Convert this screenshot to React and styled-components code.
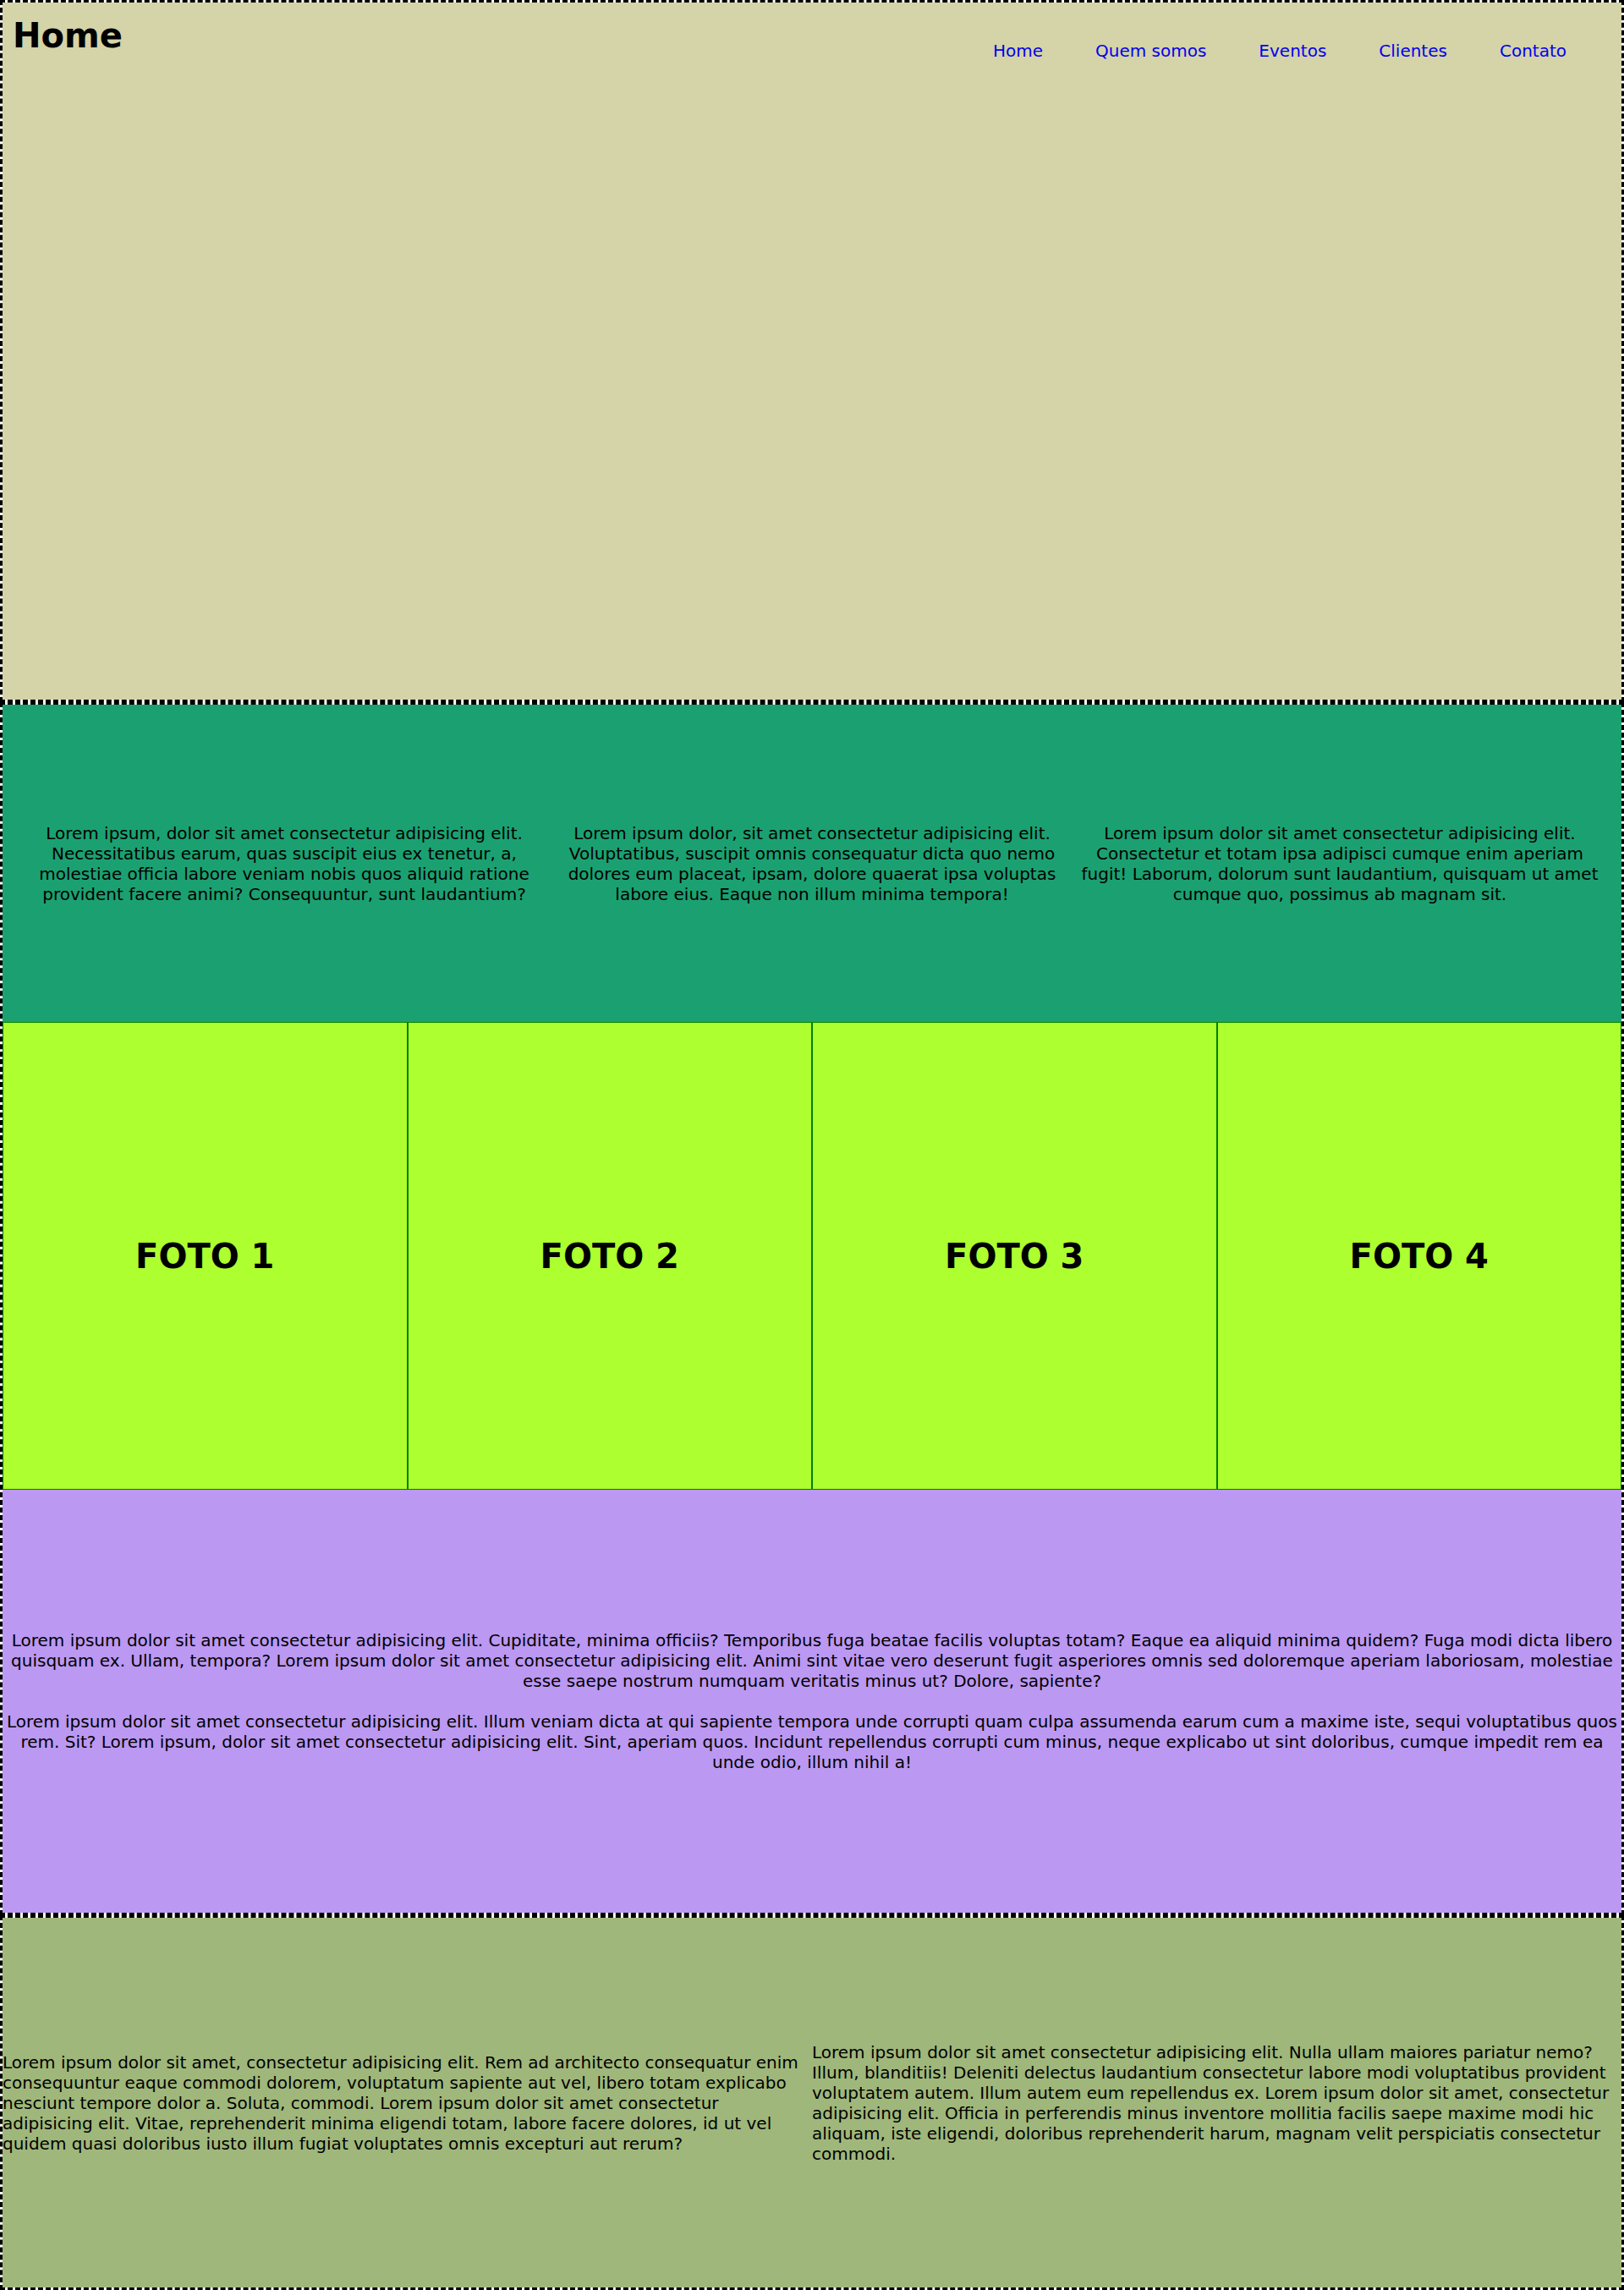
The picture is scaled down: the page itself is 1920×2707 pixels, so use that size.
import React from "react";
import styled, { createGlobalStyle } from "styled-components";

const GlobalStyle = createGlobalStyle`
 * {
  box-sizing: border-box;
 }
 body {
  margin: 0;
  background: #fff;
  color: #000;
  font-family: "DejaVu Sans", Verdana, sans-serif;
  font-size: 20px;
  line-height: 24px;
 }
`;

const Header = styled.header`
 display: flex;
 justify-content: space-between;
 align-items: flex-start;
 height: 830px;
 border: 3px dashed #000;
 background: #d5d3a8;
 background-clip: padding-box;
`;

const Title = styled.h1`
 margin: 16px 0 0 12px;
 font-size: 40px;
 line-height: 46px;
 font-weight: bold;
`;

const Nav = styled.nav`
 display: flex;
 margin: 45px 34px 0 0;
`;

const NavLink = styled.a`
 padding: 0 31px;
 color: #0000ee;
 text-decoration: none;
 font-size: 20px;
 line-height: 24px;
`;

const Main = styled.main`
 border: 3px dashed #000;
`;

const Intro = styled.section`
 display: grid;
 grid-template-columns: repeat(3, 1fr);
 align-items: center;
 height: 375px;
 padding: 0 21px;
 background: #1ba171;
 text-align: center;

 p {
  margin: 0;
 }
`;

const Gallery = styled.section`
 display: flex;
 height: 553px;
`;

const Photo = styled.div`
 flex: 1;
 display: flex;
 align-items: center;
 justify-content: center;
 border: 1px solid #008000;
 background: #adff2f;
`;

const PhotoLabel = styled.h1`
 margin: 0;
 font-size: 40px;
 line-height: 46px;
`;

const Highlight = styled.section`
 display: flex;
 flex-direction: column;
 justify-content: center;
 height: 500px;
 background: #bb98f2;
 text-align: center;

 p {
  margin: 0;
 }
 p + p {
  margin-top: 24px;
 }
`;

const Footer = styled.footer`
 display: flex;
 align-items: center;
 height: 443px;
 border: 3px dashed #000;
 background: #9fb77a;
 background-clip: padding-box;
`;

const FooterCol = styled.div`
 flex: 1;

 p {
  margin: 0;
 }
`;

const links = ["Home", "Quem somos", "Eventos", "Clientes", "Contato"];

const intro = [
 "Lorem ipsum, dolor sit amet consectetur adipisicing elit. Necessitatibus earum, quas suscipit eius ex tenetur, a, molestiae officia labore veniam nobis quos aliquid ratione provident facere animi? Consequuntur, sunt laudantium?",
 "Lorem ipsum dolor, sit amet consectetur adipisicing elit. Voluptatibus, suscipit omnis consequatur dicta quo nemo dolores eum placeat, ipsam, dolore quaerat ipsa voluptas labore eius. Eaque non illum minima tempora!",
 "Lorem ipsum dolor sit amet consectetur adipisicing elit. Consectetur et totam ipsa adipisci cumque enim aperiam fugit! Laborum, dolorum sunt laudantium, quisquam ut amet cumque quo, possimus ab magnam sit.",
];

const photos = ["FOTO 1", "FOTO 2", "FOTO 3", "FOTO 4"];

export default function App() {
 return (
  <>
   <GlobalStyle />
   <Header>
    <Title>Home</Title>
    <Nav>
     {links.map(link => (
      <NavLink key={link} href="#">{link}</NavLink>
     ))}
    </Nav>
   </Header>
   <Main>
    <Intro>
     {intro.map((text, i) => (
      <p key={i}>{text}</p>
     ))}
    </Intro>
    <Gallery>
     {photos.map(photo => (
      <Photo key={photo}>
       <PhotoLabel>{photo}</PhotoLabel>
      </Photo>
     ))}
    </Gallery>
    <Highlight>
     <p>
      Lorem ipsum dolor sit amet consectetur adipisicing elit. Cupiditate, minima officiis? Temporibus fuga beatae facilis voluptas totam? Eaque ea aliquid minima quidem? Fuga modi dicta libero quisquam ex. Ullam, tempora? Lorem ipsum dolor sit amet consectetur adipisicing elit. Animi sint vitae vero deserunt fugit asperiores omnis sed doloremque aperiam laboriosam, molestiae esse saepe nostrum numquam veritatis minus ut? Dolore, sapiente?
     </p>
     <p>
      Lorem ipsum dolor sit amet consectetur adipisicing elit. Illum veniam dicta at qui sapiente tempora unde corrupti quam culpa assumenda earum cum a maxime iste, sequi voluptatibus quos rem. Sit? Lorem ipsum, dolor sit amet consectetur adipisicing elit. Sint, aperiam quos. Incidunt repellendus corrupti cum minus, neque explicabo ut sint doloribus, cumque impedit rem ea unde odio, illum nihil a!
     </p>
    </Highlight>
   </Main>
   <Footer>
    <FooterCol>
     <p>
      Lorem ipsum dolor sit amet, consectetur adipisicing elit. Rem ad architecto consequatur enim consequuntur eaque commodi dolorem, voluptatum sapiente aut vel, libero totam explicabo nesciunt tempore dolor a. Soluta, commodi. Lorem ipsum dolor sit amet consectetur adipisicing elit. Vitae, reprehenderit minima eligendi totam, labore facere dolores, id ut vel quidem quasi doloribus iusto illum fugiat voluptates omnis excepturi aut rerum?
     </p>
    </FooterCol>
    <FooterCol>
     <p>
      Lorem ipsum dolor sit amet consectetur adipisicing elit. Nulla ullam maiores pariatur nemo? Illum, blanditiis! Deleniti delectus laudantium consectetur labore modi voluptatibus provident voluptatem autem. Illum autem eum repellendus ex. Lorem ipsum dolor sit amet, consectetur adipisicing elit. Officia in perferendis minus inventore mollitia facilis saepe maxime modi hic aliquam, iste eligendi, doloribus reprehenderit harum, magnam velit perspiciatis consectetur commodi.
     </p>
    </FooterCol>
   </Footer>
  </>
 );
}
